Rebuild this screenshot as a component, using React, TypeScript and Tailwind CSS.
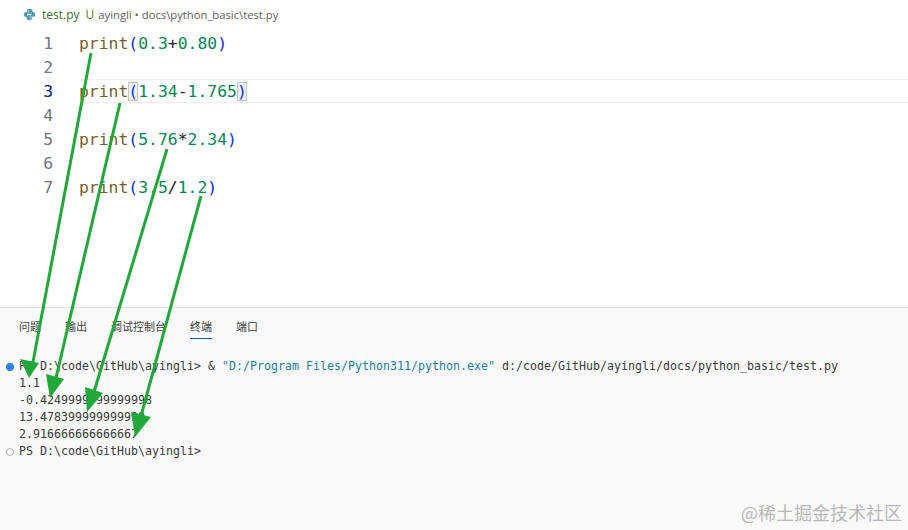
const mono = "font-['DejaVu_Sans_Mono',monospace]";

const Fn = () => <span className="text-[#795e26]">print</span>;
const P = ({ c }: { c: string }) => <span className="text-[#0431fa]">{c}</span>;
const N = ({ c }: { c: string }) => <span className="text-[#098658]">{c}</span>;

const lines = [
  <><Fn /><P c="(" /><N c="0.3" />+<N c="0.80" /><P c=")" /></>,
  null,
  <>
    <Fn />
    <span className="bg-[#f0f0f0] outline outline-1 -outline-offset-1 outline-[#c4c4c4]"><P c="(" /></span>
    <N c="1.34" />-<N c="1.765" />
    <span className="bg-[#f0f0f0] outline outline-1 -outline-offset-1 outline-[#c4c4c4]"><P c=")" /></span>
  </>,
  null,
  <><Fn /><P c="(" /><N c="5.76" />*<N c="2.34" /><P c=")" /></>,
  null,
  <><Fn /><P c="(" /><N c="3.5" />/<N c="1.2" /><P c=")" /></>,
];

const panelTabs = ["问题", "输出", "调试控制台", "终端", "端口"];

// green annotation arrows drawn over the page
const arrows = [
  { x1: 91, y1: 53, x2: 33, y2: 362, head: "20,359 39,363 29,378" },
  { x1: 120, y1: 103, x2: 56, y2: 378, head: "46,374 64,379 50,398" },
  { x1: 167, y1: 149, x2: 94, y2: 392, head: "85,387 103,393 87,412" },
  { x1: 201, y1: 196, x2: 141, y2: 416, head: "131,412 151,417 135,437" },
];

function PythonIcon() {
  return (
    <svg width="13" height="13" viewBox="0 0 16 16">
      <path d="M7.9 1C5.2 1 5 2.2 5 3v1.6h3.1v.6H3.4C2 5.2 1 6.2 1 8.1s1 3 2.3 3H5V9.3c0-1.2 1-2.2 2.2-2.2h2.6c1 0 1.9-.8 1.9-1.9V3c0-1.1-1-2-3.8-2zM6.4 2.2a.6.6 0 1 1 0 1.2.6.6 0 0 1 0-1.2z" fill="#519aba" />
      <path d="M8.1 15c2.7 0 2.9-1.2 2.9-2v-1.6H7.9v-.6h4.7c1.4 0 2.4-1 2.4-2.9s-1-3-2.3-3H11v1.8c0 1.2-1 2.2-2.2 2.2H6.2c-1 0-1.9.8-1.9 1.9V13c0 1.1 1 2 3.8 2zm1.5-1.2a.6.6 0 1 1 0-1.2.6.6 0 0 1 0 1.2z" fill="#519aba" />
    </svg>
  );
}

export default function App() {
  return (
    <div className="relative w-[908px] h-[530px] overflow-hidden bg-white flex flex-col">
      {/* breadcrumb */}
      <div className="h-[31px] pl-[23px] pt-[7px] flex items-start gap-[6px] text-[12px] leading-[16px] font-['Open_Sans',sans-serif]">
        <span className="mt-[1px]"><PythonIcon /></span>
        <span className="text-[#3f6b2e]">test.py</span>
        <span className="text-[#587c0c]">U</span>
        <span className="ml-[-2px] text-[11.25px] text-[#616161]">ayingli • docs\python_basic\test.py</span>
      </div>

      {/* editor */}
      <div className={`h-[276px] text-[16.4px] leading-[26px] text-[#222] ${mono}`}>
        {lines.map((code, i) => (
          <div key={i} className="flex h-[24px]">
            <div className={`w-[53px] text-right ${i === 2 ? "text-[#0b216f]" : "text-[#6e7681]"}`}>{i + 1}</div>
            <div className={`ml-[26px] flex-1 whitespace-pre ${i === 2 ? "border-y border-[#eeeeee] leading-[24px]" : ""}`}>{code}</div>
          </div>
        ))}
      </div>

      {/* panel */}
      <div className="flex-1 bg-[#f9f9f9] border-t border-[#e5e5e5]">
        <div className="h-[31px] pl-[19px] flex gap-[24px] text-[11px] text-[#424242] font-['Noto_Sans_CJK_SC',sans-serif]">
          {panelTabs.map((t) => (
            <div key={t} className={`pt-[10px] leading-[17px] h-[31px] ${t === "终端" ? "border-b border-[#005fb8] text-[#3b3b3b]" : ""}`}>{t}</div>
          ))}
        </div>
        <div className={`pt-[19px] text-[11.63px] leading-[17px] text-[#3b3b3b] whitespace-pre ${mono}`}>
          <div className="flex items-center h-[17px]">
            <span className="w-[8px] h-[8px] ml-[6px] mr-[5px] rounded-full bg-[#2a86d8]" />
            <span>PS D:\code\GitHub\ayingli&gt; &amp; <span className="text-[#1f7f9e]">"D:/Program Files/Python311/python.exe"</span> d:/code/GitHub/ayingli/docs/python_basic/test.py</span>
          </div>
          {["1.1", "-0.4249999999999998", "13.478399999999999", "2.916666666666667"].map((o) => (
            <div key={o} className="pl-[19px] h-[17px]">{o}</div>
          ))}
          <div className="flex items-center h-[17px]">
            <span className="w-[8px] h-[8px] ml-[6px] mr-[5px] rounded-full border border-[#b5b5b5]" />
            <span>PS D:\code\GitHub\ayingli&gt;</span>
          </div>
        </div>
      </div>

      <svg className="absolute inset-0 pointer-events-none" width="908" height="530">
        {arrows.map((a) => (
          <g key={a.head}>
            <line x1={a.x1} y1={a.y1} x2={a.x2} y2={a.y2} stroke="#22a83a" strokeWidth="3" />
            <polygon points={a.head} fill="#22a83a" />
          </g>
        ))}
      </svg>

      <div className="absolute right-[6px] bottom-[6px] text-[18px] leading-[24px] text-[#b8b8b8] font-['Noto_Sans_CJK_SC',sans-serif]">@稀土掘金技术社区</div>
    </div>
  );
}
